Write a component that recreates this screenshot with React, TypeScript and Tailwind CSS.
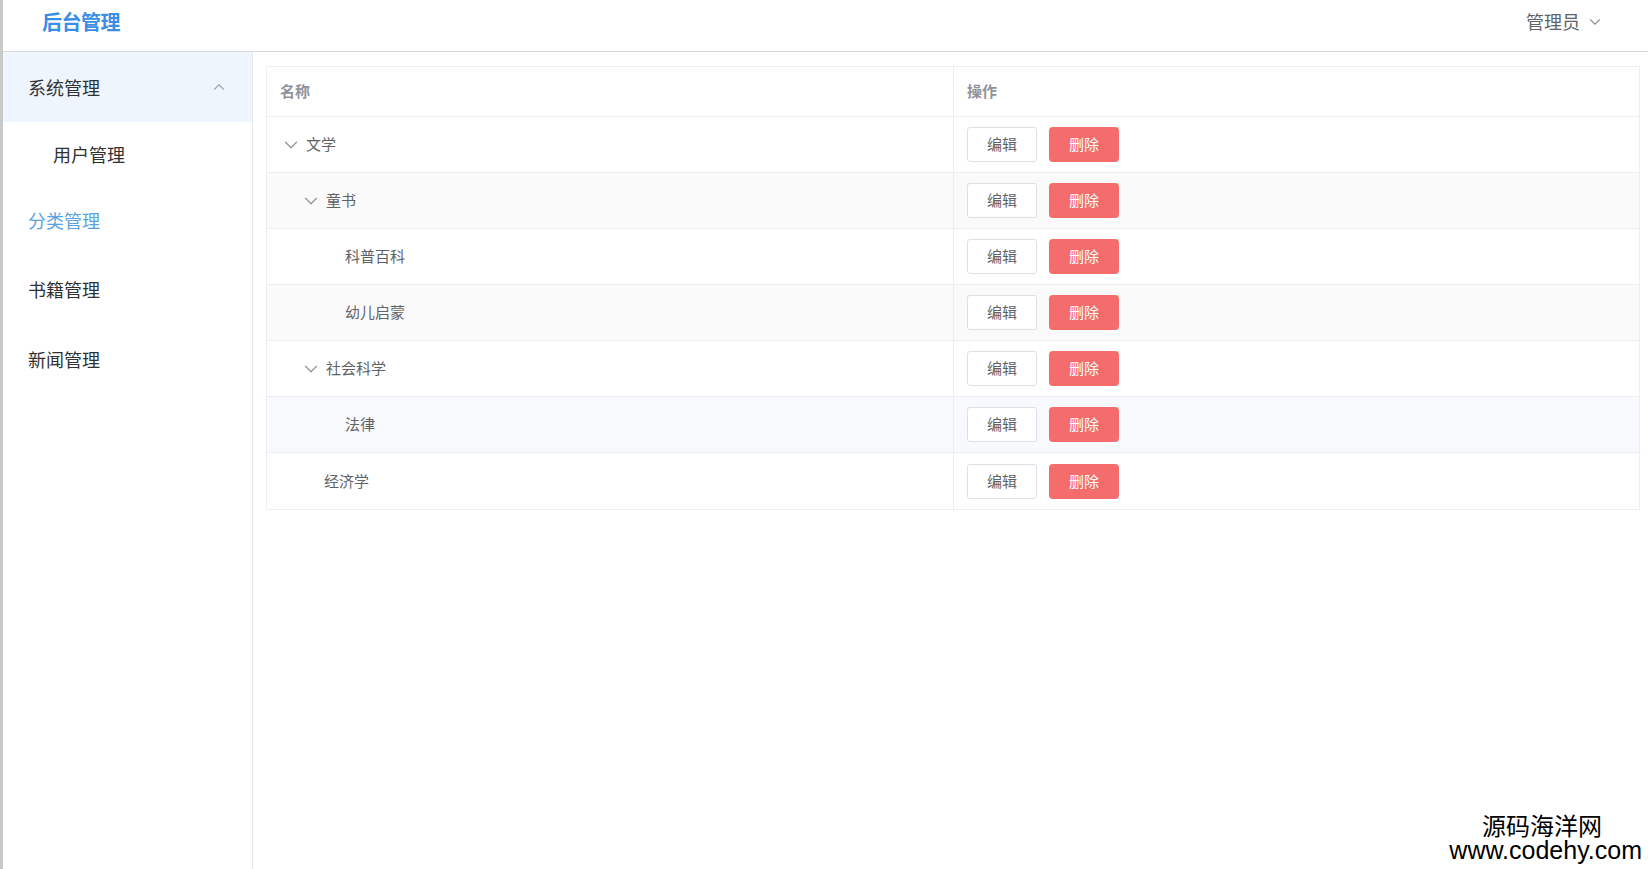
import { ChevronDown, ChevronUp } from 'lucide-react'

const rows = [
  { name: '文学', level: 0, expandable: true },
  { name: '童书', level: 1, expandable: true },
  { name: '科普百科', level: 2, expandable: false },
  { name: '幼儿启蒙', level: 2, expandable: false },
  { name: '社会科学', level: 1, expandable: true },
  { name: '法律', level: 2, expandable: false },
  { name: '经济学', level: 1, expandable: false },
]

const indentClass = ['pl-[13px]', 'pl-[33px]', 'pl-[79px]']
const leafIndentClass = ['pl-[41px]', 'pl-[57px]', 'pl-[78px]']

export default function App() {
  return (
    <div
      className="relative h-[869px] w-full overflow-hidden border-l-[3px] border-[#c9c9c9] bg-white flex flex-col"
      style={{ fontFamily: '"Noto Sans CJK SC", "Noto Sans", sans-serif' }}
    >
      {/* Header */}
      <header className="h-[52px] shrink-0 flex items-center justify-between pl-[39px] pr-[44px] pb-[8px] border-b border-[#d6d9de]">
        <div className="text-[20px] font-bold text-[#3a8ee6] tracking-tight">后台管理</div>
        <div className="flex items-center gap-[6px] text-[18px] text-[#606266]">
          <span>管理员</span>
          <ChevronDown className="w-[18px] h-[18px] text-[#909399]" strokeWidth={1.5} />
        </div>
      </header>

      <div className="flex flex-1 min-h-0">
        {/* Sidebar */}
        <aside className="w-[250px] shrink-0 border-r border-[#e6e6e6] text-[18px] text-[#303133]">
          <div className="h-[70px] flex items-center justify-between pl-[25px] pr-[24px] bg-[#eef5fc]">
            <span>系统管理</span>
            <ChevronUp className="w-[18px] h-[18px] text-[#a0a4ab]" strokeWidth={1.5} />
          </div>
          <div className="h-[64px] flex items-center pl-[50px]">用户管理</div>
          <div className="h-[68px] flex items-center pl-[25px] text-[#5aa2e0]">分类管理</div>
          <div className="h-[70px] flex items-center pl-[25px]">书籍管理</div>
          <div className="h-[70px] flex items-center pl-[25px]">新闻管理</div>
        </aside>

        {/* Main */}
        <main className="flex-1 pl-[13px] pt-[14px] pr-[8px]">
          <div className="border border-[#ebeef5]">
            <div className="grid grid-cols-[687px_1fr] h-[50px] border-b border-[#ebeef5] text-[15px] font-bold text-[#909399]">
              <div className="flex items-center pl-[13px] border-r border-[#ebeef5]">名称</div>
              <div className="flex items-center pl-[13px]">操作</div>
            </div>
            {rows.map((row, i) => (
              <div
                key={row.name}
                className={
                  'grid grid-cols-[687px_1fr] h-[56px] border-b border-[#ebeef5] last:border-b-0 text-[15px] text-[#606266] ' +
                  (i === 5 ? 'bg-[#f7f9fc]' : i % 2 === 1 ? 'bg-[#fafafa]' : 'bg-white')
                }
              >
                <div
                  className={
                    'flex items-center border-r border-[#ebeef5] ' +
                    (row.expandable ? indentClass[row.level] : leafIndentClass[row.level])
                  }
                >
                  {row.expandable && (
                    <ChevronDown className="w-[22px] h-[22px] mr-[4px] text-[#909399]" strokeWidth={1.3} />
                  )}
                  <span>{row.name}</span>
                </div>
                <div className="flex items-center gap-[12px] pl-[13px]">
                  <button className="w-[70px] h-[35px] rounded-[3px] border border-[#dcdfe6] bg-white text-[15px] text-[#606266]">
                    编辑
                  </button>
                  <button className="w-[70px] h-[35px] rounded-[4px] bg-[#f56c6c] text-[15px] text-white">
                    删除
                  </button>
                </div>
              </div>
            ))}
          </div>
        </main>
      </div>

      {/* Watermark */}
      <div className="absolute right-[6px] bottom-[6px] flex flex-col items-end text-black">
        <span className="text-[24px] leading-[24px] pr-[40px]">源码海洋网</span>
        <span className="text-[25px] leading-[26px]" style={{ fontFamily: '"Liberation Sans", sans-serif' }}>
          www.codehy.com
        </span>
      </div>
    </div>
  )
}
